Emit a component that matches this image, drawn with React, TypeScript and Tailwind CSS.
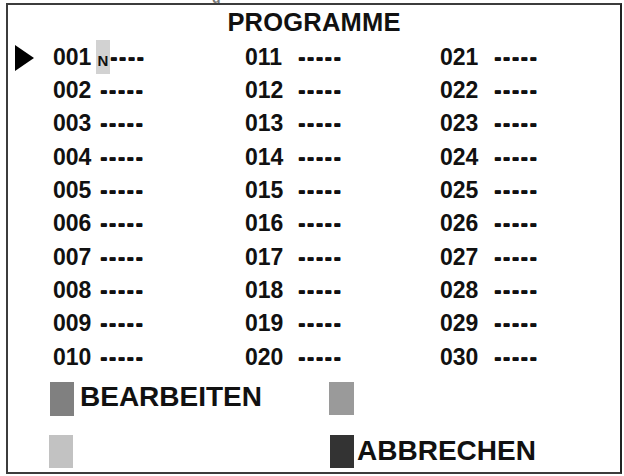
import React from "react";

const font = { fontFamily: '"Liberation Sans", Arial, sans-serif' };

const pad = (n: number) => String(n).padStart(3, "0");

const Cell: React.FC<{ n: number; gap: string; first?: boolean }> = ({ n, gap, first }) => (
  <div className="flex items-center h-[33px]">
    <span className="inline-block w-[38px]">{pad(n)}</span>
    {first ? (
      <>
        <div className="ml-[5px] self-stretch -mt-[1px] h-[34px] w-[14px] shrink-0 bg-[#d2d2d2] flex items-end justify-center pb-[7px] text-[15px] leading-[12px] text-[#111]">
          N
        </div>
        <span className="tracking-[1.2px] [text-shadow:0_1px_0_#111]">----</span>
      </>
    ) : (
      <span className={`${gap} tracking-[1.2px] [text-shadow:0_1px_0_#111]`}>-----</span>
    )}
  </div>
);

export default function App() {
  const rows = Array.from({ length: 10 }, (_, i) => i + 1);
  return (
    <div className="w-[624px] h-[476px] bg-white text-[#111] font-bold" style={font}>
      <div className="h-[3px] overflow-hidden pl-[212px] text-[14px] leading-none text-[#777]">
        <span className="block -mt-[9px]">g</span>
      </div>
      <div className="ml-[6px] w-[616px] h-[471px] border-2 border-[#3c3c3c] border-r-[#222]">
        <div className="mt-[2px] text-center text-[25.5px] leading-[30px] tracking-[0.2px]">PROGRAMME</div>
        <div className="mt-[4px] text-[23px]">
          {rows.map((r) => (
            <div key={r} className="grid grid-cols-[45px_192px_195px_1fr] h-[33.3px] leading-[33.3px]">
              <div className="flex items-center pl-[7px]">
                {r === 1 && (
                  <svg width="19" height="26" viewBox="0 0 19 26">
                    <polygon points="0,0 19,13 0,26" fill="#000" />
                  </svg>
                )}
              </div>
              <Cell n={r} gap="ml-[9px]" first={r === 1} />
              <Cell n={r + 10} gap="ml-[15px]" />
              <Cell n={r + 20} gap="ml-[16px]" />
            </div>
          ))}
        </div>
        <div className="mt-[8px] grid grid-cols-[279px_1fr] gap-y-[19px] pl-[42px] text-[28px] leading-none">
          <div className="flex items-start">
            <span className="w-[24px] h-[34px] bg-[#808080]" />
            <span className="ml-[6px] mt-[1px]">BEARBEITEN</span>
          </div>
          <div className="flex items-start">
            <span className="w-[25px] h-[33px] bg-[#9a9a9a]" />
          </div>
          <div className="flex items-start">
            <span className="-ml-[1px] w-[24px] h-[33px] bg-[#c2c2c2]" />
          </div>
          <div className="flex items-center">
            <span className="ml-[1px] w-[24px] h-[33px] bg-[#333]" />
            <span className="ml-[3px]">ABBRECHEN</span>
          </div>
        </div>
      </div>
    </div>
  );
}
